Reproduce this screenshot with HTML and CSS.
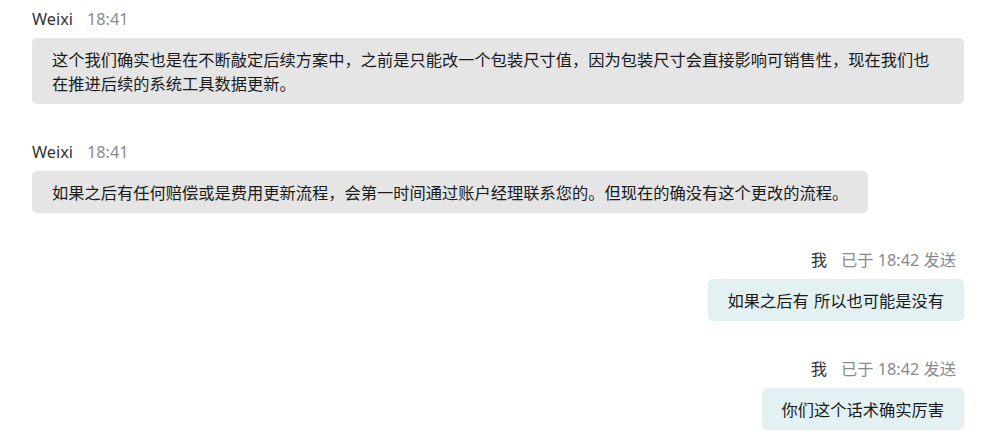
FILE: index.html
```html
<!DOCTYPE html>
<html lang="zh-CN">
<head>
<meta charset="utf-8">
<title>Chat</title>
<link rel="stylesheet" href="styles.css">
</head>
<body>
<div class="chat">
  <div class="msg msg-in">
    <div class="meta"><span class="name">Weixi</span><span class="time">18:41</span></div>
    <div class="bubble">这个我们确实也是在不断敲定后续方案中，之前是只能改一个包装尺寸值，因为包装尺寸会直接影响可销售性，现在我们也在推进后续的系统工具数据更新。</div>
  </div>
  <div class="msg msg-in">
    <div class="meta"><span class="name">Weixi</span><span class="time">18:41</span></div>
    <div class="bubble">如果之后有任何赔偿或是费用更新流程，会第一时间通过账户经理联系您的。但现在的确没有这个更改的流程。</div>
  </div>
  <div class="msg msg-out">
    <div class="meta"><span class="name">我</span><span class="time">已于 18:42 发送</span></div>
    <div class="bubble">如果之后有 所以也可能是没有</div>
  </div>
  <div class="msg msg-out">
    <div class="meta"><span class="name">我</span><span class="time">已于 18:42 发送</span></div>
    <div class="bubble">你们这个话术确实厉害</div>
  </div>
</div>
</body>
</html>
```

FILE: styles.css
```css
html, body {
  margin: 0;
  padding: 0;
  background: #ffffff;
}

body {
  font-family: "Noto Sans", "Noto Sans CJK SC", sans-serif;
  font-size: 16.25px;
  line-height: 24px;
  color: #1f1f1f;
}

.chat {
  display: flex;
  flex-direction: column;
  gap: 35.5px;
  padding: 7px 31px 0 32px;
}

.msg {
  display: flex;
  flex-direction: column;
  gap: 7px;
}

.msg-in {
  align-items: flex-start;
}

.msg-out {
  align-items: flex-end;
}

.meta {
  display: flex;
  gap: 14px;
  height: 24px;
}

.msg-out .meta {
  padding-right: 8px;
}

.name {
  color: #333333;
}

.time {
  color: #8a8a8a;
}

.bubble {
  padding: 9px 20px;
  border-radius: 5px;
  font-family: "Noto Sans CJK SC", "Noto Sans", sans-serif;
  word-spacing: 1.5px;
  color: #1a1a1a;
}

.msg-in .bubble {
  background: #e5e5e5;
}

.msg-out .bubble {
  background: #e3f1f2;
}
```
